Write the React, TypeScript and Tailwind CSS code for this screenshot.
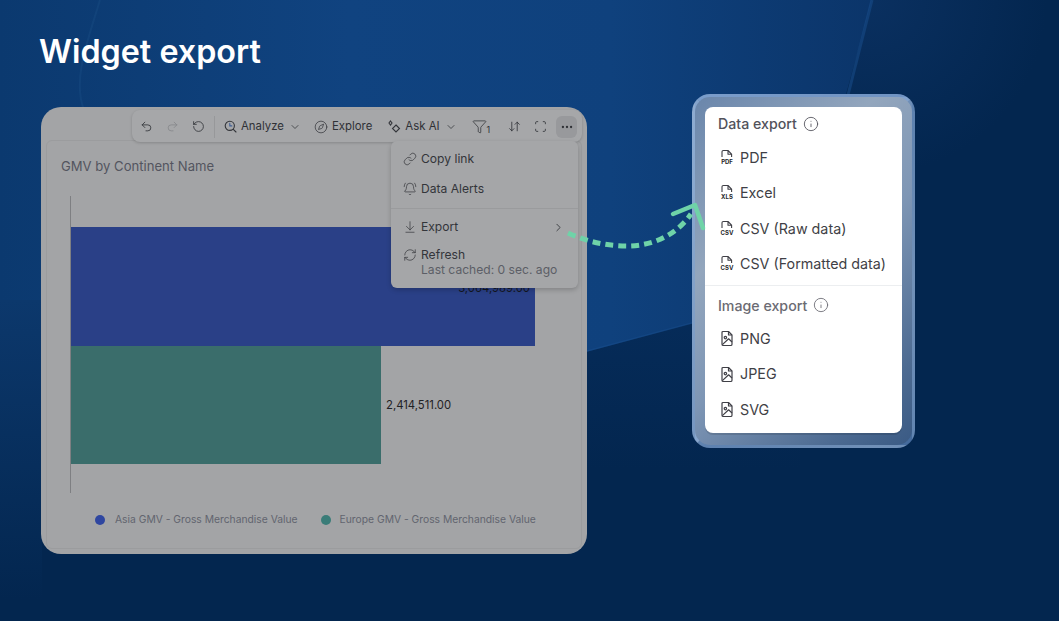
import React from 'react';
import {
  ArrowDownUp,
  ArrowDownToLine,
  BellRing,
  ChevronDown,
  ChevronRight,
  Compass,
  Ellipsis,
  Funnel,
  Info,
  Link,
  Redo2,
  RefreshCw,
  RotateCcw,
  Scan,
  Undo2,
} from 'lucide-react';

function FileTag({ label }: { label: string }) {
  return (
    <svg width="16" height="17" viewBox="0 0 16 17" className="shrink-0">
      <path
        d="M3 8V2.8a1.3 1.3 0 0 1 1.3-1.3H9l3.6 3.6V8M9 1.7v3.6h3.6"
        fill="none"
        stroke="#3f3f46"
        strokeWidth="1.1"
        strokeLinejoin="round"
      />
      <text x="8" y="15.2" textAnchor="middle" fontSize="6" fontWeight="700" fill="#27272a" fontFamily="Inter, sans-serif">
        {label}
      </text>
    </svg>
  );
}

function FileImg() {
  return (
    <svg width="16" height="17" viewBox="0 0 16 17" fill="none" stroke="#3f3f46" strokeWidth="1.2" strokeLinejoin="round" className="shrink-0">
      <path d="M4 1.5H9.5L13 5V14.2A1.3 1.3 0 0 1 11.7 15.5H4.3A1.3 1.3 0 0 1 3 14.2V2.5A1 1 0 0 1 4 1.5Z" />
      <path d="M9.5 1.7V5H13" />
      <circle cx="6.4" cy="7.6" r="1.2" />
      <path d="M3.4 14.6L9.6 8.8L13 12" />
    </svg>
  );
}

function ExportRow({ label, tag }: { label: string; tag?: string }) {
  return (
    <div className="flex h-[35.3px] items-center gap-[5px] pl-[14px] text-[14.3px] text-[#3f3f46]">
      {tag ? <FileTag label={tag} /> : <FileImg />}
      <span>{label}</span>
    </div>
  );
}

function Sparkle() {
  return (
    <svg width="14" height="14" viewBox="0 0 14 14" fill="none" stroke="#33353a" strokeWidth="1.1">
      <path d="M3.5 1 L5 3 L3.5 5 L2 3 Z" />
      <path d="M9 5 L12.5 8.5 L9 12 L5.5 8.5 Z" />
    </svg>
  );
}

function AnalyzeIcon() {
  return (
    <svg width="13" height="13" viewBox="0 0 13 13" fill="none" stroke="#33353a" strokeWidth="1.1" strokeLinecap="round">
      <circle cx="5.8" cy="5.8" r="4.6" />
      <path d="M9.3 9.3L12 12" />
      <path d="M5.8 3.4V5.9H7.8" stroke="#3f5f96" />
    </svg>
  );
}

export default function App() {
  return (
    <div className="relative h-[621px] w-[1059px] overflow-hidden bg-[#03264f] font-['Inter',sans-serif]">
      {/* background shapes */}
      <svg className="absolute inset-0" width="1059" height="621" viewBox="0 0 1059 621">
        <defs>
          <linearGradient id="sheet" x1="0" y1="0" x2="1" y2="0">
            <stop offset="0" stopColor="#0b396f" />
            <stop offset="0.4" stopColor="#104380" />
            <stop offset="0.7" stopColor="#0f417d" />
            <stop offset="1" stopColor="#0b356a" />
          </linearGradient>
          <radialGradient id="right" gradientUnits="userSpaceOnUse" cx="872" cy="0" r="175">
            <stop offset="0" stopColor="#0a3060" />
            <stop offset="1" stopColor="#03264f" />
          </radialGradient>
          <linearGradient id="side" x1="0" y1="0" x2="0" y2="1">
            <stop offset="0" stopColor="#0c386c" />
            <stop offset="1" stopColor="#03264f" />
          </linearGradient>
          <linearGradient id="low" x1="0" y1="0" x2="0" y2="1">
            <stop offset="0" stopColor="#062c5a" />
            <stop offset="1" stopColor="#03264f" />
          </linearGradient>
        </defs>
        <rect y="300" width="800" height="170" fill="url(#low)" />
        <path d="M872 0H1059V300H790Z" fill="url(#right)" />
        <path d="M0 0H872L790 297L0 510Z" fill="url(#sheet)" />
        <rect y="300" width="42" height="300" fill="url(#side)" />
        <path d="M872 0L848 95" stroke="#1a5090" strokeWidth="3" opacity="0.5" />
        <path d="M587 351L692 323" stroke="#1a5090" strokeWidth="1.5" opacity="0.4" />
        <path d="M100 0C88 40 72 80 84 110" fill="none" stroke="#1c5088" strokeWidth="2" opacity="0.35" />
      </svg>

      <div className="relative px-[41px] pt-[30px]">
        <h1 className="-ml-[2px] h-[44px] text-[32.3px] font-semibold leading-[44px] text-white">Widget export</h1>

        <div className="mt-[20px] flex items-start">
          {/* dimmed widget */}
          <div className="relative mt-[13px] h-[447px] w-[546px] rounded-[20px] bg-[#a3a4a6] px-[5px] pt-[33px]">
            <div className="h-[409px] rounded-[6px] border border-[#9b9c9e] px-[14px] pt-[16px]">
              <div className="text-[13.1px] leading-[18px] text-[#53555f]">GMV by Continent Name</div>
              <div className="ml-[9px] mt-[21px] h-[297px] w-[465px] border-l border-[#7e7f82] pt-[31px]">
                <div className="relative h-[119px] w-[464px] bg-[#2a4087]">
                  <span className="absolute right-[5px] top-[53px] text-[11.3px] text-[#14171f]">3,064,989.00</span>
                </div>
                <div className="flex h-[118px] items-center">
                  <div className="h-full w-[310px] bg-[#3a6d6b]" />
                  <span className="ml-[5px] text-[11.3px] text-[#1f2124]">2,414,511.00</span>
                </div>
              </div>
              <div className="ml-[34px] mt-[19px] flex items-center text-[10.3px] text-[#62646f]">
                <span className="h-[10px] w-[10px] rounded-full bg-[#2f46a0]" />
                <span className="ml-[10px]">Asia GMV - Gross Merchandise Value</span>
                <span className="ml-[23px] h-[10px] w-[10px] rounded-full bg-[#3a7c78]" />
                <span className="ml-[9px]">Europe GMV - Gross Merchandise Value</span>
              </div>
            </div>

            {/* toolbar */}
            <div className="absolute left-[91px] top-[3px] flex h-[32px] w-[450px] items-center rounded-[8px] bg-[#a6a7a9] pl-[8px] pt-[1px] text-[11.4px] text-[#2f3136] shadow-[0_1px_3px_rgba(0,0,0,0.18)]">
              <Undo2 className="h-[13px] w-[13px]" strokeWidth={1.5} />
              <Redo2 className="ml-[13px] h-[13px] w-[13px] text-[#85868a]" strokeWidth={1.5} />
              <RotateCcw className="ml-[13px] h-[13px] w-[13px]" strokeWidth={1.5} />
              <span className="ml-[9px] h-[22px] w-px bg-[#97989a]" />
              <span className="ml-[9px] flex"><AnalyzeIcon /></span>
              <span className="ml-[4px]">Analyze</span>
              <ChevronDown className="ml-[5px] h-[12px] w-[12px]" strokeWidth={1.5} />
              <Compass className="ml-[13px] h-[14px] w-[14px]" strokeWidth={1.2} />
              <span className="ml-[4px]">Explore</span>
              <span className="ml-[15px] flex"><Sparkle /></span>
              <span className="ml-[4px]">Ask AI</span>
              <ChevronDown className="ml-[5px] h-[12px] w-[12px]" strokeWidth={1.5} />
              <Funnel className="ml-[15px] h-[15px] w-[15px]" strokeWidth={1.2} />
              <span className="mt-[7px] text-[9px]">1</span>
              <ArrowDownUp className="ml-[18px] h-[13px] w-[13px]" strokeWidth={1.5} />
              <Scan className="ml-[13px] h-[13px] w-[13px]" strokeWidth={1.5} />
              <span className="ml-[9px] flex h-[22px] w-[21px] items-center justify-center rounded-[6px] bg-[#98999c]">
                <Ellipsis className="h-[14px] w-[14px]" strokeWidth={2} />
              </span>
            </div>

            {/* dropdown */}
            <div className="absolute left-[350px] top-[34px] h-[147px] w-[187px] rounded-[6px] bg-[#a5a6a8] pt-[3px] text-[12.1px] text-[#33353a] shadow-[0_2px_5px_rgba(0,0,0,0.2)]">
              <div className="flex h-[30px] items-center gap-[4px] pl-[12px]">
                <Link className="h-[14px] w-[14px]" strokeWidth={1.2} />
                <span>Copy link</span>
              </div>
              <div className="flex h-[30px] items-center gap-[4px] pl-[12px]">
                <BellRing className="h-[14px] w-[14px]" strokeWidth={1.2} />
                <span>Data Alerts</span>
              </div>
              <div className="mt-[4px] border-t border-[#9a9b9d] pt-[4px]">
                <div className="flex h-[28px] items-center gap-[4px] pl-[12px]">
                  <ArrowDownToLine className="h-[14px] w-[14px]" strokeWidth={1.2} />
                  <span>Export</span>
                  <ChevronRight className="ml-auto mr-[13px] h-[13px] w-[13px]" strokeWidth={1.6} />
                </div>
                <div className="mt-[6px] flex items-start gap-[4px] pl-[12px]">
                  <RefreshCw className="mt-[1px] h-[14px] w-[14px]" strokeWidth={1.2} />
                  <div className="leading-[15px]">
                    <div>Refresh</div>
                    <div className="text-[#5c5e66]">Last cached: 0 sec. ago</div>
                  </div>
                </div>
              </div>
            </div>
          </div>

          {/* export panel */}
          <div className="ml-[105px] h-[354px] w-[223px] rounded-[18px] border-[3px] border-[#4f7cb4]/50 border-l-[#8fb0da]/70 border-t-[#7ea2d2]/80 bg-[linear-gradient(135deg,#6a86ab_0%,#93a6bd_32%,#7e96b5_55%,#4d6b92_85%,#3a5a84_100%)] p-[10px]">
            <div className="h-[326px] w-[197px] rounded-[8px] bg-white pt-[6px] shadow-[0_2px_0_rgba(0,0,0,0.12)]">
              <div className="flex h-[22px] items-center gap-[6px] pl-[13px] text-[14.2px] font-medium text-[#52525b]">
                Data export <Info className="h-[16px] w-[16px]" strokeWidth={1.3} />
              </div>
              <div className="mt-[5px]">
                <ExportRow label="PDF" tag="PDF" />
                <ExportRow label="Excel" tag="XLS" />
                <ExportRow label="CSV (Raw data)" tag="CSV" />
                <ExportRow label="CSV (Formatted data)" tag="CSV" />
              </div>
              <div className="mt-[4px] border-t border-[#eceef0] pt-[8px]">
                <div className="flex h-[22px] items-center gap-[6px] pl-[13px] text-[14.2px] font-medium text-[#6b6b73]">
                  Image export <Info className="h-[16px] w-[16px]" strokeWidth={1.3} />
                </div>
                <div className="mt-[5px]">
                  <ExportRow label="PNG" />
                  <ExportRow label="JPEG" />
                  <ExportRow label="SVG" />
                </div>
              </div>
            </div>
          </div>
        </div>
      </div>

      {/* arrow from menu to panel */}
      <svg className="absolute left-[560px] top-[195px]" width="150" height="60" viewBox="0 0 150 60" fill="none">
        <path d="M8 38C30 48 50 51 67 51C95 51 118 38 131 19" stroke="#6fd3a8" strokeWidth="5" strokeDasharray="8 5" />
        <path d="M113 19L135 10L143 33" stroke="#6fd3a8" strokeWidth="4.5" strokeLinecap="round" strokeLinejoin="round" />
      </svg>
    </div>
  );
}
